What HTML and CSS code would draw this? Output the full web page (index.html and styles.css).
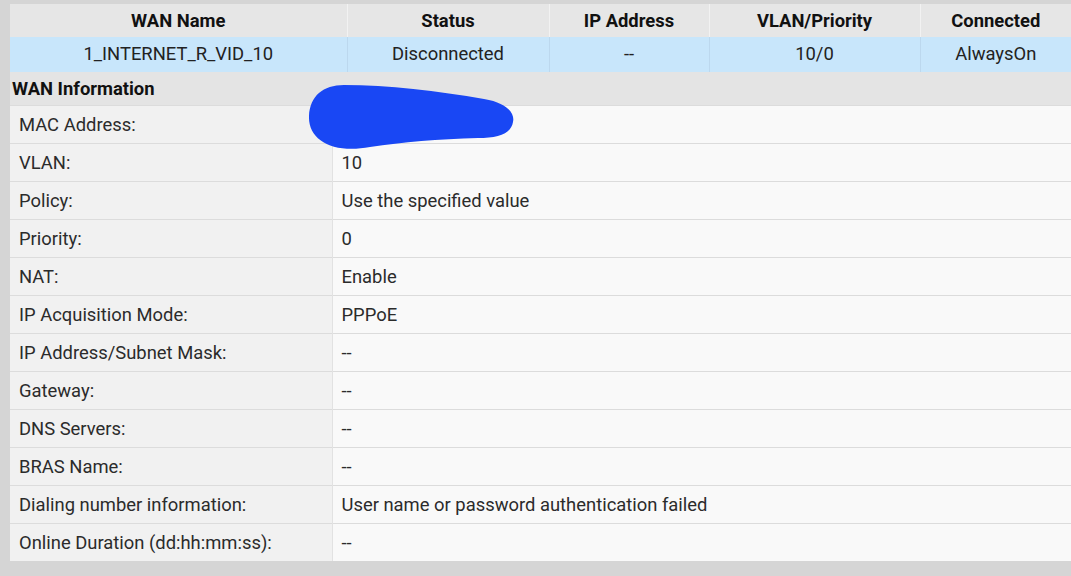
FILE: index.html
```html
<!DOCTYPE html>
<html lang="en">
<head>
    <meta charset="UTF-8">
    <meta name="viewport" content="width=device-width, initial-scale=1.0">
    <title>WAN Information</title>
    <link rel="stylesheet" href="styles.css">
</head>
<body>

<div class="page">
    <table class="wan-list">
        <colgroup>
            <col class="c-name">
            <col class="c-status">
            <col class="c-ip">
            <col class="c-vlan">
            <col class="c-conn">
        </colgroup>
        <tr>
            <th>WAN Name</th>
            <th>Status</th>
            <th>IP Address</th>
            <th>VLAN/Priority</th>
            <th>Connected</th>
        </tr>
        <tr class="selected">
            <td>1_INTERNET_R_VID_10</td>
            <td>Disconnected</td>
            <td>--</td>
            <td>10/0</td>
            <td>AlwaysOn</td>
        </tr>
    </table>

    <div class="section-title">WAN Information</div>

    <div class="info-wrap">
        <table class="wan-info">
            <colgroup>
                <col class="c-label">
                <col>
            </colgroup>
            <tr><td class="label">MAC Address:</td><td class="value"></td></tr>
            <tr><td class="label">VLAN:</td><td class="value">10</td></tr>
            <tr><td class="label">Policy:</td><td class="value">Use the specified value</td></tr>
            <tr><td class="label">Priority:</td><td class="value">0</td></tr>
            <tr><td class="label">NAT:</td><td class="value">Enable</td></tr>
            <tr><td class="label">IP Acquisition Mode:</td><td class="value">PPPoE</td></tr>
            <tr><td class="label">IP Address/Subnet Mask:</td><td class="value">--</td></tr>
            <tr><td class="label">Gateway:</td><td class="value">--</td></tr>
            <tr><td class="label">DNS Servers:</td><td class="value">--</td></tr>
            <tr><td class="label">BRAS Name:</td><td class="value">--</td></tr>
            <tr><td class="label">Dialing number information:</td><td class="value">User name or password authentication failed</td></tr>
            <tr><td class="label">Online Duration (dd:hh:mm:ss):</td><td class="value">--</td></tr>
        </table>

        <!-- hand-drawn marker hiding the MAC -->
        <svg class="scribble" width="208" height="68" viewBox="0 0 208 68">
            <path d="M 36 1 C 80 1, 130 7, 176 15 C 200 19, 207 30, 205 38 C 203 50, 190 54, 170 54 C 130 55, 95 58, 62 63 C 25 70, 0 56, 1 32 C 2 12, 15 1, 36 1 Z" fill="#1947f4"/>
        </svg>
    </div>
</div>

</body>
</html>
```

FILE: styles.css
```css
html, body {
    margin: 0;
    height: 100%;
    background: #d5d5d5;
    font-family: Roboto, "Liberation Sans", sans-serif;
    font-size: 18.4px;
    color: #2b2b2b;
    overflow: hidden;
}
.page {
    padding: 4px 0 0 10px;
}
table {
    width: 100%;
    border-collapse: collapse;
    table-layout: fixed;
}
.wan-list th,
.wan-list td {
    text-align: center;
    border-left: 1px solid #d8d8d8;
    padding: 0;
}
.wan-list th:first-child,
.wan-list td:first-child {
    border-left: none;
}
.wan-list th {
    height: 33px;
    background: #e6e6e6;
    color: #111;
    font-weight: bold;
    border-left-color: #f2f2f2;
}
.wan-list td {
    height: 32px;
    padding-bottom: 3px;
    background: #c8e6fb;
    color: #222;
    border-left-color: #bcd8ee;
}
.c-name { width: 337px; }
.c-status { width: 202px; }
.c-ip { width: 160px; }
.c-vlan { width: 211px; }

.section-title {
    height: 33px;
    line-height: 33px;
    background: #e4e4e4;
    font-weight: bold;
    color: #111;
    padding-left: 2px;
}

.info-wrap {
    position: relative;
}
.c-label { width: 322px; }
.wan-info td {
    height: 37px;
    padding: 0;
    border-top: 1px solid #dcdcdc;
}
.wan-info .label {
    background: #f1f1f1;
    padding-left: 9px;
    border-right: 1px solid #e2e2e2;
}
.wan-info .value {
    background: #f9f9f9;
    padding-left: 9px;
}
.scribble {
    position: absolute;
    left: 298px;
    top: -21px;
}
```
